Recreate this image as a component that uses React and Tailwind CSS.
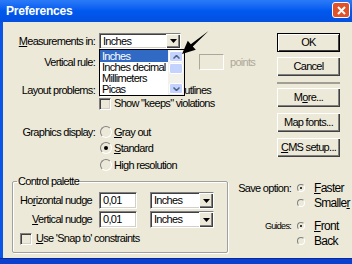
import React from "react";

const sunken =
  "border border-t-[#808080] border-l-[#808080] border-b-white border-r-white shadow-[inset_1px_1px_0_#404040,inset_-1px_-1px_0_#D4D0C8]";
const raised =
  "bg-[#ECE9D8] shadow-[inset_1px_1px_0_#fff,inset_-1px_-1px_0_#404040,inset_-2px_-2px_0_#808080]";

function Select({ value, w = "w-[82px]", h = "h-[16px]" }) {
  return (
    <div className={`flex ${w} ${h} bg-white ${sunken}`}>
      <div className="flex-1 pl-[3px] text-[11px] leading-[14px] overflow-hidden whitespace-nowrap">
        {value}
      </div>
      <div className={`w-[14px] h-full flex items-center justify-center ${raised}`}>
        <svg width="7" height="4" viewBox="0 0 7 4">
          <polygon points="0,0 7,0 3.5,4" fill="#000" />
        </svg>
      </div>
    </div>
  );
}

function Checkbox() {
  return <div className={`w-[12px] h-[12px] shrink-0 bg-[#ECE9D8] ${sunken}`} />;
}

function Radio({ on, small }) {
  return (
    <div
      className={`${small ? "w-[8px] h-[8px]" : "w-[12px] h-[12px]"} shrink-0 rounded-full border-[1.5px] border-t-[#808080] border-l-[#808080] border-b-white border-r-white bg-[#ECE9D8] flex items-center justify-center`}
    >
      {on && (
        <div className={`${small ? "w-[2px] h-[2px]" : "w-[4px] h-[4px]"} rounded-full bg-black`} />
      )}
    </div>
  );
}

function Button({ children, def }) {
  return (
    <div
      className={
        def
          ? "h-[19px] w-[63px] flex items-center justify-center border border-black bg-[#ECE9D8] shadow-[inset_1px_1px_0_#fff,inset_-1px_-1px_0_#404040]"
          : `h-[19px] w-[63px] flex items-center justify-center ${raised}`
      }
    >
      {children}
    </div>
  );
}

function Label({ children }) {
  return <div className="w-[96px] pr-[4px] text-right shrink-0">{children}</div>;
}

export default function App() {
  return (
    <div className="relative w-[352px] h-[264px] overflow-hidden flex flex-col bg-[#0A54E6] font-['Liberation_Sans',Arial,sans-serif] text-[11px] text-black tracking-[-0.7px] leading-[13px]">
      {/* Title bar */}
      <div className="h-[22px] flex items-center justify-between pl-[6px] pr-[2px] bg-gradient-to-b from-[#2B7BF8] via-[#0058EE] to-[#0450E0]">
        <div className="text-white font-bold text-[12px] tracking-[-0.2px]">Preferences</div>
        <div className="self-start mt-[2px] w-[18px] h-[16px] rounded-[3px] border border-white bg-[#E2522A] flex items-center justify-center">
          <svg width="9" height="9" viewBox="0 0 9 9">
            <path d="M1 1 L8 8 M8 1 L1 8" stroke="#fff" strokeWidth="2" />
          </svg>
        </div>
      </div>

      {/* Body */}
      <div className="ml-[3px] h-[236px] bg-[#ECE9D8] flex flex-col">
        <div className="flex h-[154px]">
          <div className="w-[274px] pt-[11px] flex flex-col">
            <div className="flex items-center h-[16px]">
              <Label>
                <span className="underline">M</span>easurements in:
              </Label>
              <Select value="Inches" />
            </div>
            <div className="flex items-center h-[16px] mt-[5px]">
              <Label>Vertical rule:</Label>
              <Select value="" />
              <div className="ml-[18px] w-[25px] h-[16px] border border-t-[#ACA899] border-l-[#ACA899] border-b-white border-r-white" />
              <div className="ml-[6px] text-[#ACA899]">points</div>
            </div>
            <div className="flex items-center h-[13px] mt-[14px]">
              <Label>Layout problems:</Label>
              <Checkbox />
              <div className="ml-[6px] whitespace-nowrap">
                <span className="invisible">Show missing </span>outlines
              </div>
            </div>
            <div className="flex items-center h-[13px]">
              <Label />
              <Checkbox />
              <div className="ml-[3px] whitespace-nowrap">Show "keeps" violations</div>
            </div>
            <div className="flex items-center h-[14px] mt-[15px]">
              <Label>Graphics display:</Label>
              <div className="ml-[1px]">
                <Radio />
              </div>
              <div className="ml-[2px]">
                <span className="underline">G</span>ray out
              </div>
            </div>
            <div className="flex items-center h-[14px] mt-[2px]">
              <Label />
              <div className="ml-[1px]">
                <Radio on />
              </div>
              <div className="ml-[2px]">
                <span className="underline">S</span>tandard
              </div>
            </div>
            <div className="flex items-center h-[14px] mt-[3px]">
              <Label />
              <div className="ml-[1px]">
                <Radio />
              </div>
              <div className="ml-[2px]">High resolution</div>
            </div>
          </div>

          <div className="w-[63px] pt-[11px] flex flex-col">
            <Button def>OK</Button>
            <div className="mt-[5px]">
              <Button>Cancel</Button>
            </div>
            <div className="mt-[6px] h-[2px] bg-[#A19F94]" />
            <div className="mt-[4px]">
              <Button>
                M<span className="underline">o</span>re...
              </Button>
            </div>
            <div className="mt-[6px]">
              <Button>Map fonts...</Button>
            </div>
            <div className="mt-[6px]">
              <Button>
                <span className="underline">C</span>MS setup...
              </Button>
            </div>
          </div>
        </div>

        <div className="flex h-[82px]">
          <fieldset className="ml-[9px] w-[216px] h-[77px] border border-[#A0A0A0] rounded-[2px] shadow-[inset_1px_1px_0_#fff,1px_1px_0_#fff]">
            <legend className="ml-[4px] px-[1px] leading-[11px]">Control palette</legend>
            <div className="pt-[5px] flex flex-col">
              <div className="flex items-center h-[17px]">
                <div className="w-[86px] pr-[7px] text-right">
                  Ho<span className="underline">r</span>izontal nudge
                </div>
                <div className={`w-[38px] h-[17px] bg-white pl-[3px] leading-[15px] ${sunken}`}>0,01</div>
                <div className="ml-[13px]">
                  <Select value="Inches" w="w-[64px]" h="h-[17px]" />
                </div>
              </div>
              <div className="flex items-center h-[17px] mt-[2px]">
                <div className="w-[86px] pr-[7px] text-right">
                  <span className="underline">V</span>ertical nudge
                </div>
                <div className={`w-[38px] h-[17px] bg-white pl-[3px] leading-[15px] ${sunken}`}>0,01</div>
                <div className="ml-[13px]">
                  <Select value="Inches" w="w-[64px]" h="h-[17px]" />
                </div>
              </div>
              <div className="flex items-center h-[13px] mt-[4px] pl-[7px]">
                <Checkbox />
                <div className="ml-[4px]">
                  <span className="underline">U</span>se 'Snap to' constraints
                </div>
              </div>
            </div>
          </fieldset>

          <div className="flex flex-col pt-[5px]">
            <div className="flex items-center h-[14px]">
              <div className="w-[65px] pr-[2px] text-right">Save option:</div>
              <div className="ml-[4px]">
                <Radio small on />
              </div>
              <div className="ml-[9px] text-[12px]">
                <span className="underline">F</span>aster
              </div>
            </div>
            <div className="flex items-center h-[14px] mt-[1px]">
              <div className="w-[65px]" />
              <div className="ml-[4px]">
                <Radio small />
              </div>
              <div className="ml-[9px] text-[12px]">
                Smalle<span className="underline">r</span>
              </div>
            </div>
            <div className="flex items-center h-[14px] mt-[9px]">
              <div className="w-[65px] pr-[2px] text-right text-[9px]">Guides:</div>
              <div className="ml-[4px]">
                <Radio small on />
              </div>
              <div className="ml-[9px] text-[12px]">
                <span className="underline">F</span>ront
              </div>
            </div>
            <div className="flex items-center h-[14px] mt-[1px]">
              <div className="w-[65px]" />
              <div className="ml-[4px]">
                <Radio small />
              </div>
              <div className="ml-[9px] text-[12px]">Back</div>
            </div>
          </div>
        </div>
      </div>
      <div className="flex-1 bg-[#0B3FD0] border-t border-[#0A2A9A]" />

      {/* Open dropdown list */}
      <div className="absolute left-[99px] top-[49px] w-[86px] h-[47px] border border-black bg-white flex">
        <div className="flex-1 flex flex-col">
          <div className="h-[12px] bg-[#316AC5] text-white pl-[2px] leading-[12px]">Inches</div>
          <div className="h-[11px] pl-[2px] leading-[11px] whitespace-nowrap">Inches decimal</div>
          <div className="h-[11px] pl-[2px] leading-[11px]">Millimeters</div>
          <div className="h-[11px] pl-[2px] leading-[11px]">Picas</div>
        </div>
        <div className="w-[16px] bg-[#F3F1EC] flex flex-col justify-between p-[1px]">
          <div className="flex flex-col gap-[1px]">
            <div className="h-[11px] rounded-[2px] bg-[#C3D3FD] border border-white flex items-center justify-center">
              <svg width="7" height="4" viewBox="0 0 7 4">
                <path d="M0.5 3.5 L3.5 0.5 L6.5 3.5" stroke="#4D6185" strokeWidth="1.5" fill="none" />
              </svg>
            </div>
            <div className="h-[11px] rounded-[2px] bg-[#C3D3FD] border border-white" />
          </div>
          <div className="h-[11px] rounded-[2px] bg-[#C3D3FD] border border-white flex items-center justify-center">
            <svg width="7" height="4" viewBox="0 0 7 4">
              <path d="M0.5 0.5 L3.5 3.5 L6.5 0.5" stroke="#4D6185" strokeWidth="1.5" fill="none" />
            </svg>
          </div>
        </div>
      </div>

      {/* Pointer arrow */}
      <svg
        className="absolute left-[178px] top-[28px]"
        width="34"
        height="30"
        viewBox="178 28 34 30"
      >
        <polygon
          points="182,54 195.8,49.8 192.8,46.4 208.5,31 190.8,44.2 187.8,40.8"
          fill="#000"
        />
      </svg>
    </div>
  );
}
